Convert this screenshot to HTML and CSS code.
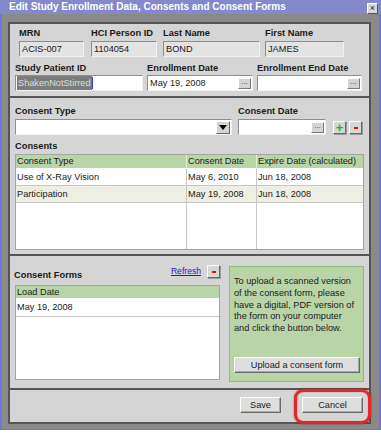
FILE: index.html
```html
<!DOCTYPE html>
<html lang="en">
<head>
    <meta charset="UTF-8">
    <meta name="viewport" content="width=device-width, initial-scale=1.0">
    <title>Edit Study Enrollment</title>
    <link rel="stylesheet" href="styles.css">
</head>
<body>
    <div class="window">
        <div class="titlebar">
            <span class="title">Edit Study Enrollment Data, Consents and Consent Forms</span>
            <span class="close">&times;</span>
        </div>
        <div class="frame">
            <div class="panel">
                <section class="sec sec-person">
                    <div class="row row-first">
                        <div class="fld w-mrn"><div class="lbl">MRN</div><div class="input ro">ACIS-007</div></div>
                        <div class="fld w-hci"><div class="lbl">HCI Person ID</div><div class="input ro">1104054</div></div>
                        <div class="fld w-last"><div class="lbl">Last Name</div><div class="input ro">BOND</div></div>
                        <div class="fld w-first"><div class="lbl">First Name</div><div class="input ro">JAMES</div></div>
                    </div>
                    <div class="row row-second">
                        <div class="fld w-study"><div class="lbl">Study Patient ID</div><div class="input"><span class="selected">ShakenNotStirred</span><span class="caret"></span></div></div>
                        <div class="fld w-enroll"><div class="lbl">Enrollment Date</div><div class="input date">May 19, 2008<span class="dots">...</span></div></div>
                        <div class="fld w-end"><div class="lbl">Enrollment End Date</div><div class="input date"><span class="dots">...</span></div></div>
                    </div>
                </section>

                <section class="sec sec-consents">
                    <div class="row">
                        <div class="fld w-type"><div class="lbl">Consent Type</div><div class="input combo"><span class="arrow"></span></div></div>
                        <div class="fld w-cdate"><div class="lbl">Consent Date</div><div class="input date"><span class="dots">...</span></div></div>
                        <div class="pm">
                            <span class="mini plus">+</span>
                            <span class="mini minus"><i></i></span>
                        </div>
                    </div>
                    <div class="lbl lbl-consents">Consents</div>
                    <div class="tbl tbl-consents">
                        <div class="th">Consent Type</div>
                        <div class="th">Consent Date</div>
                        <div class="th last">Expire Date (calculated)</div>
                        <div class="td">Use of X-Ray Vision</div>
                        <div class="td">May 6, 2010</div>
                        <div class="td last">Jun 18, 2008</div>
                        <div class="td alt">Participation</div>
                        <div class="td alt">May 19, 2008</div>
                        <div class="td alt last">Jun 18, 2008</div>
                        <div class="td fill"></div>
                        <div class="td fill"></div>
                        <div class="td fill last"></div>
                    </div>
                </section>

                <section class="sec sec-forms">
                    <div class="forms-left">
                        <div class="forms-head">
                            <div class="lbl">Consent Forms</div>
                            <a class="refresh" href="#">Refresh</a>
                            <span class="mini minus"><i></i></span>
                        </div>
                        <div class="tbl tbl-forms">
                            <div class="th last">Load Date</div>
                            <div class="td last">May 19, 2008</div>
                            <div class="td fill last"></div>
                        </div>
                    </div>
                    <div class="upload-box">
                        <p>To upload a scanned version of the consent form, please have a digital, PDF version of the form on your computer and click the button below.</p>
                        <button class="btn btn-upload">Upload a consent form</button>
                    </div>
                </section>

                <section class="sec sec-actions">
                    <button class="btn btn-save">Save</button>
                    <button class="btn btn-cancel">Cancel</button>
                </section>
            </div>
        </div>
        <div class="highlight"></div>
    </div>
    <div class="under"></div>
</body>
</html>
```

FILE: styles.css
```css
body {
    margin: 0;
    background-color: #ffffff;
    font-family: "Liberation Sans", Arial, sans-serif;
    font-size: 9.2px;
    color: #1a1a1a;
    overflow: hidden;
}
.window {
    position: relative;
    width: 381px;
}
.titlebar {
    height: 14px;
    background-color: #8389cb;
    display: flex;
    align-items: center;
    justify-content: space-between;
    padding: 0 3px 0 9px;
}
.title {
    color: #ffffff;
    font-weight: bold;
    font-size: 10px;
    line-height: 14px;
}
.close {
    width: 9px;
    height: 9px;
    margin-top: 2px;
    background-color: #d8d8d8;
    border: 1px solid;
    border-color: #ffffff #555555 #555555 #ffffff;
    font-size: 9px;
    line-height: 8px;
    text-align: center;
    color: #222222;
}
.frame {
    background-color: #8a8a8a;
    border-left: 2px solid #6d75dc;
    border-right: 2px solid #6d75dc;
    border-bottom: 1px solid #6d75dc;
    padding: 8px 8px 5px 6px;
}
.panel {
    background-color: #d5d5d5;
    border: 2px solid #555555;
    height: 398px;
    display: flex;
    flex-direction: column;
}
.sec {
    border-bottom: 2px solid #555555;
}
.lbl {
    font-weight: bold;
    font-size: 9.3px;
    line-height: 11px;
    height: 11px;
    color: #1a1a1a;
    white-space: nowrap;
}
.row {
    display: flex;
}
.input {
    position: relative;
    height: 14px;
    line-height: 14px;
    padding-left: 2px;
    background-color: #ffffff;
    border: 1px solid;
    border-color: #8e8e8e #f2f2f2 #f2f2f2 #8e8e8e;
    white-space: nowrap;
    overflow: hidden;
}
.input.ro {
    background-color: #e3e3e3;
}

/* person section */
.sec-person {
    height: 74px;
    padding: 4px 0 0 0;
    box-sizing: border-box;
}
.row-first {
    padding-left: 9px;
}
.row-first .lbl {
    margin-bottom: 2px;
}
.row-second {
    padding-left: 5px;
    margin-top: 6px;
}
.row-second .lbl {
    margin-bottom: 1px;
}
.w-mrn { width: 65px; margin-right: 7px; }
.w-hci { width: 66px; margin-right: 6px; }
.w-last { width: 97px; margin-right: 5px; }
.w-first { width: 79px; }
.w-study { width: 128px; margin-right: 4px; }
.w-enroll { width: 106px; margin-right: 4px; }
.w-end { width: 105px; }
.selected {
    display: inline-block;
    background-color: #7c7c7c;
    color: #dcdcdc;
    line-height: 14px;
    margin-left: -1px;
    padding: 0 1px;
}
.caret {
    display: inline-block;
    width: 1px;
    height: 12px;
    background-color: #3040d0;
    vertical-align: top;
    margin-top: 1px;
}
.dots {
    position: absolute;
    right: 1px;
    top: 2px;
    width: 11px;
    height: 9px;
    background-color: #d4d4d4;
    border: 1px solid;
    border-color: #ffffff #7a7a7a #7a7a7a #ffffff;
    font-size: 8px;
    line-height: 5px;
    text-align: center;
    color: #444444;
}

/* consents section */
.sec-consents {
    height: 158px;
    padding: 8px 0 0 5px;
    box-sizing: border-box;
}
.sec-consents .lbl {
    margin-bottom: 2px;
}
.w-type { width: 217px; margin-right: 6px; }
.w-cdate { width: 88px; margin-right: 7px; }
.combo .arrow {
    position: absolute;
    right: 1px;
    top: 1px;
    width: 12px;
    height: 11px;
    background-color: #d4d4d4;
    border: 1px solid;
    border-color: #ffffff #6a6a6a #6a6a6a #ffffff;
}
.combo .arrow::after {
    content: "";
    position: absolute;
    left: 2px;
    top: 3px;
    border-left: 4px solid transparent;
    border-right: 4px solid transparent;
    border-top: 5px solid #000000;
}
.pm {
    display: flex;
    gap: 3px;
    padding-top: 15px;
}
.mini {
    width: 11px;
    height: 11px;
    background-color: #d6d6d6;
    border: 1px solid;
    border-color: #ffffff #6a6a6a #6a6a6a #ffffff;
    box-shadow: 1px 1px 0 #9a9a9a;
    display: flex;
    align-items: center;
    justify-content: center;
}
.plus {
    color: #1cb81c;
    font-weight: bold;
    font-size: 13px;
    line-height: 11px;
}
.minus i {
    display: block;
    width: 4px;
    height: 2px;
    background-color: #e01010;
}
.lbl-consents {
    margin-top: 6px;
}
.tbl {
    display: grid;
    background-color: #ffffff;
    border: 1px solid #a4a4a4;
    box-sizing: border-box;
}
.tbl-consents {
    width: 349px;
    height: 96px;
    grid-template-columns: 171px 70px 1fr;
    grid-template-rows: 14px 17px 17px 1fr;
}
.th {
    background-color: #b9d5a8;
    border-right: 1px solid #e4eedd;
    border-bottom: 1px solid #ffffff;
    line-height: 13px;
    padding-left: 1px;
    white-space: nowrap;
}
.td {
    border-right: 1px solid #c6c6c6;
    border-bottom: 1px solid #c6c6c6;
    line-height: 16px;
    padding-left: 1px;
    white-space: nowrap;
}
.td.alt {
    background-color: #eeeee3;
}
.td.fill {
    border-bottom: none;
}
.last {
    border-right: none;
}

/* forms section */
.sec-forms {
    height: 134px;
    box-sizing: border-box;
    padding: 9px 0 0 5px;
    display: flex;
}
.forms-left {
    width: 205px;
    margin-right: 9px;
}
.forms-head {
    height: 20px;
    display: flex;
    align-items: flex-start;
}
.forms-head .lbl {
    margin-top: 5px;
    margin-left: -1px;
    flex: 1;
}
.refresh {
    color: #1b1bd6;
    font-size: 8.6px;
    margin-top: 1px;
    margin-right: 6px;
}
.tbl-forms {
    width: 205px;
    height: 95px;
    grid-template-columns: 1fr;
    grid-template-rows: 13px 18px 1fr;
}
.upload-box {
    width: 135px;
    height: 116px;
    margin-top: 1px;
    box-sizing: border-box;
    background-color: #b9d5a8;
    border: 1px solid #8fbd7e;
    padding: 9px 4px 0 4px;
    display: flex;
    flex-direction: column;
}
.upload-box p {
    margin: 0;
    font-size: 9.2px;
    line-height: 11.8px;
    color: #1a1a1a;
}
.btn {
    font-family: "Liberation Sans", Arial, sans-serif;
    font-size: 9.2px;
    color: #1a1a1a;
    height: 16px;
    padding: 0;
    background-color: #dedede;
    border: 1px solid;
    border-color: #ffffff #6a6a6a #6a6a6a #ffffff;
    box-shadow: inset -1px -1px 0 #a8a8a8;
    cursor: pointer;
}
.btn-upload {
    width: 126px;
    margin-top: auto;
    margin-bottom: 8px;
}

/* actions */
.sec-actions {
    border-bottom: none;
    flex: 1;
    display: flex;
    justify-content: flex-end;
    padding: 7px 6px 0 0;
}
.btn-save {
    width: 41px;
    margin-right: 21px;
}
.btn-cancel {
    width: 61px;
}
.highlight {
    position: absolute;
    left: 294px;
    top: 389px;
    width: 77px;
    height: 35px;
    box-sizing: border-box;
    border: 3px solid #e42628;
    border-radius: 9px;
    box-shadow: 0 0 2px rgba(140, 0, 0, 0.7), inset 0 0 1px rgba(140, 0, 0, 0.6);
}
.under {
    height: 4px;
    background-color: #ffffff;
}
```
